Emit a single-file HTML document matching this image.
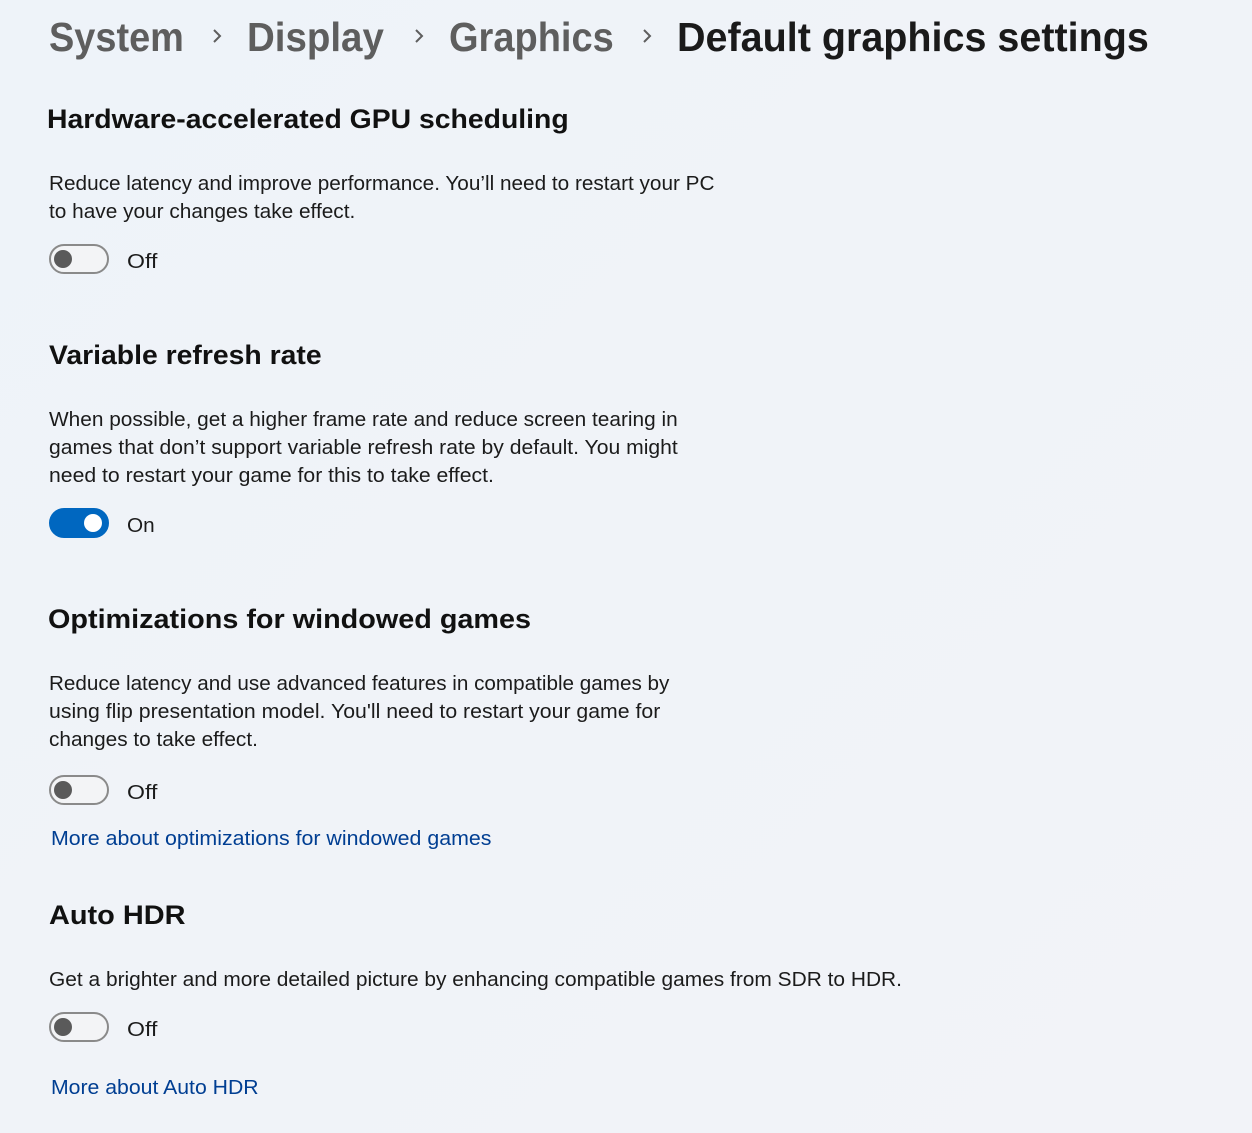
<!DOCTYPE html>
<html><head><meta charset="utf-8">
<style>
html,body{margin:0;padding:0}
body{width:1252px;height:1133px;position:relative;overflow:hidden;
background:linear-gradient(135deg,#eef3f9 0%,#f0f3f8 50%,#f2f3f8 100%);
font-family:"Liberation Sans",sans-serif;color:#1b1b1b}
.t{position:absolute;white-space:nowrap;transform-origin:0 50%}
.bc{font-size:41px;font-weight:bold;line-height:50px;color:#5e5e5e}
.bc.cur{color:#1a1a1a}
.h{font-size:27px;font-weight:bold;line-height:34px;color:#111}
.d{font-size:20px;line-height:28px;color:#1b1b1b;margin-top:2px}
.lk{font-size:20px;line-height:28px;color:#003e92;margin-top:2px}
.tg{position:absolute;left:49px;width:56px;height:26px;border:2px solid #8a8a8a;border-radius:16px;background:#f3f4f6}
.tg::after{content:"";position:absolute;left:3px;top:4px;width:18px;height:18px;border-radius:50%;background:#5a5a5a}
.tg.on{background:#0067c0;border-color:#0067c0}
.tg.on::after{left:auto;right:5px;top:4px;background:#fff}
</style></head><body>
<div class="t bc" style="left:49px;top:12px;width:135px">System</div>
<svg style="position:absolute;left:211px;top:27px" width="12" height="18"><path d="M3 3 L9 9 L3 15" fill="none" stroke="#5e5e5e" stroke-width="2"/></svg>
<div class="t bc" style="left:247px;top:12px;width:137px">Display</div>
<svg style="position:absolute;left:413px;top:27px" width="12" height="18"><path d="M3 3 L9 9 L3 15" fill="none" stroke="#5e5e5e" stroke-width="2"/></svg>
<div class="t bc" style="left:449px;top:12px;width:165px">Graphics</div>
<svg style="position:absolute;left:641px;top:27px" width="12" height="18"><path d="M3 3 L9 9 L3 15" fill="none" stroke="#5e5e5e" stroke-width="2"/></svg>
<div class="t bc cur" style="left:677px;top:12px;width:472px">Default graphics settings</div>

<div class="t h" style="left:47px;top:102px;width:522px">Hardware-accelerated GPU scheduling</div>
<div class="t d" style="left:49px;top:168px;width:665px">Reduce latency and improve performance. You’ll need to restart your PC</div>
<div class="t d" style="left:49px;top:196px;width:306px">to have your changes take effect.</div>
<div class="tg" style="top:244px"></div>
<div class="t d" style="left:127px;top:246px;width:30px">Off</div>

<div class="t h" style="left:49px;top:338px;width:273px">Variable refresh rate</div>
<div class="t d" style="left:49px;top:404px;width:629px">When possible, get a higher frame rate and reduce screen tearing in</div>
<div class="t d" style="left:49px;top:432px;width:629px">games that don’t support variable refresh rate by default. You might</div>
<div class="t d" style="left:49px;top:460px;width:445px">need to restart your game for this to take effect.</div>
<div class="tg on" style="top:508px"></div>
<div class="t d" style="left:127px;top:510px;width:28px">On</div>

<div class="t h" style="left:48px;top:602px;width:483px">Optimizations for windowed games</div>
<div class="t d" style="left:49px;top:668px;width:620px">Reduce latency and use advanced features in compatible games by</div>
<div class="t d" style="left:49px;top:696px;width:611px">using flip presentation model. You'll need to restart your game for</div>
<div class="t d" style="left:49px;top:724px;width:209px">changes to take effect.</div>
<div class="tg" style="top:775px"></div>
<div class="t d" style="left:127px;top:777px;width:30px">Off</div>
<div class="t lk" style="left:51px;top:823px;width:440px">More about optimizations for windowed games</div>

<div class="t h" style="left:49px;top:898px;width:136px">Auto HDR</div>
<div class="t d" style="left:49px;top:964px;width:853px">Get a brighter and more detailed picture by enhancing compatible games from SDR to HDR.</div>
<div class="tg" style="top:1012px"></div>
<div class="t d" style="left:127px;top:1014px;width:30px">Off</div>
<div class="t lk" style="left:51px;top:1072px;width:208px">More about Auto HDR</div>

<script>
document.querySelectorAll('.t').forEach(function(e){
  var w=parseFloat(e.style.width);e.style.width='auto';
  var s=e.scrollWidth; if(s>0&&w){e.style.transform='scaleX('+(w/s)+')';}
});
</script>
</body></html>
